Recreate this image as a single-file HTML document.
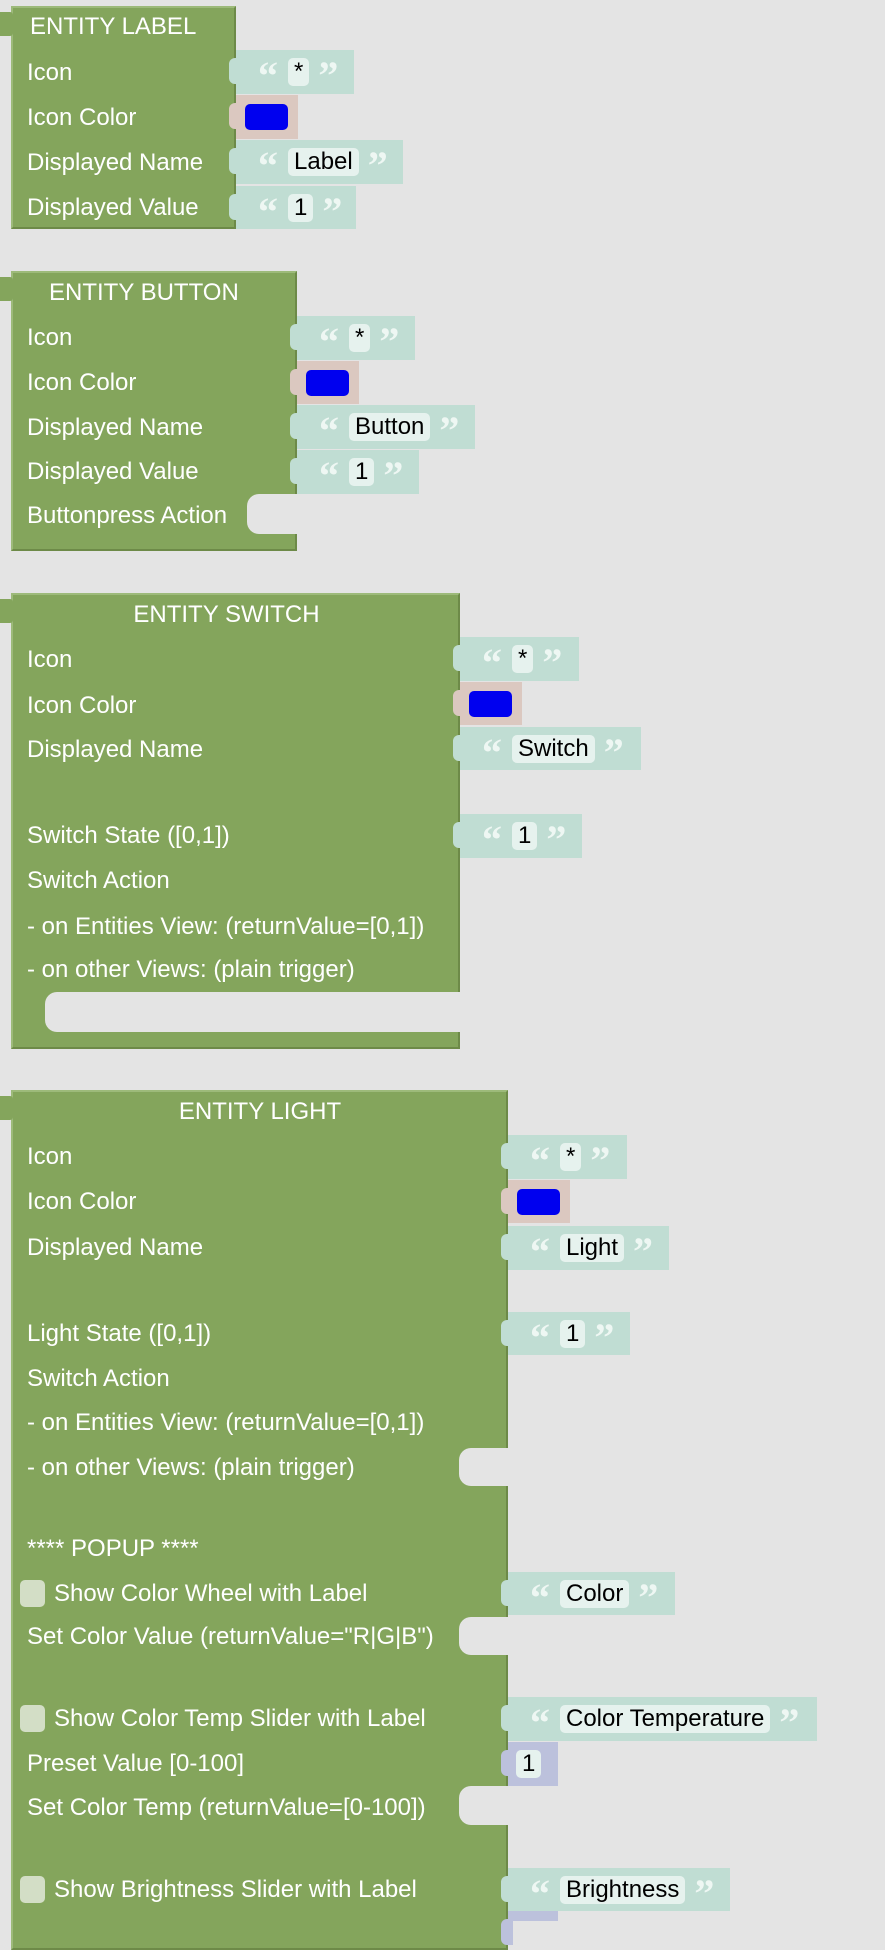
<!DOCTYPE html>
<html><head><style>
*{margin:0;padding:0;box-sizing:border-box}
body{width:885px;height:1915px;background:#e4e4e4;position:relative;overflow:hidden;font-family:"Liberation Sans",sans-serif;font-size:24px}
.b{position:absolute;background:#84a55c;border-top:2px solid #9dba7a;border-left:2px solid #9dba7a;border-bottom:2px solid #6d8a48;border-right:2px solid #6d8a48}
.t{position:absolute;color:#fff;line-height:26px;white-space:nowrap}
.v{position:absolute;background:#c0ddd3;display:flex;align-items:center;padding-left:22px;white-space:nowrap}
.v:before{content:"";position:absolute;left:-7px;top:8px;width:12px;height:26px;background:inherit;border-radius:6px 0 0 6px}
.q{color:#eef7f3;font-family:"Liberation Serif",serif;font-weight:bold;font-size:40px;line-height:24px;height:24px;overflow:visible;margin-top:8px}
.f{background:#e6f2ee;border-radius:5px;padding:0 6px;margin:0 9px 0 10px;color:#000;line-height:28px;height:28px}
.c{position:absolute;background:#dbc8c0}
.c:before{content:"";position:absolute;left:-7px;top:8px;width:12px;height:26px;background:inherit;border-radius:6px 0 0 6px}
.c i{position:absolute;left:9px;top:9px;width:43px;height:26px;background:#0000ef;border-radius:5px}
.n{position:absolute;background:#e4e4e4;border-radius:12px 0 0 12px}
.cb{position:absolute;width:25px;height:27px;background:#d3dec6;border-radius:5px}
.tab{position:absolute;left:0;width:13px;height:24px;background:#84a55c;border-radius:0 3px 3px 0}
</style></head><body>

<!-- LABEL -->
<div class="b" style="left:11px;top:6px;width:225px;height:223px"></div>
<div class="tab" style="top:12px"></div>
<div class="t" style="left:30px;top:14px">ENTITY LABEL</div>
<div class="t" style="left:27px;top:60px">Icon</div>
<div class="t" style="left:27px;top:105px">Icon Color</div>
<div class="t" style="left:27px;top:150px">Displayed Name</div>
<div class="t" style="left:27px;top:195px">Displayed Value</div>
<div class="v" style="left:236px;top:50px;width:118px;height:44px"><span class="q">“</span><span class="f">*</span><span class="q">”</span></div>
<div class="c" style="left:236px;top:95px;width:62px;height:44px"><i></i></div>
<div class="v" style="left:236px;top:140px;width:167px;height:44px"><span class="q">“</span><span class="f">Label</span><span class="q">”</span></div>
<div class="v" style="left:236px;top:186px;width:120px;height:43px"><span class="q">“</span><span class="f">1</span><span class="q">”</span></div>

<!-- BUTTON -->
<div class="b" style="left:11px;top:271px;width:286px;height:280px"></div>
<div class="tab" style="top:277px"></div>
<div class="t" style="left:49px;top:280px">ENTITY BUTTON</div>
<div class="t" style="left:27px;top:325px">Icon</div>
<div class="t" style="left:27px;top:370px">Icon Color</div>
<div class="t" style="left:27px;top:415px">Displayed Name</div>
<div class="t" style="left:27px;top:459px">Displayed Value</div>
<div class="t" style="left:27px;top:503px">Buttonpress Action</div>
<div class="n" style="left:247px;top:494px;width:52px;height:40px"></div>
<div class="v" style="left:297px;top:316px;width:118px;height:44px"><span class="q">“</span><span class="f">*</span><span class="q">”</span></div>
<div class="c" style="left:297px;top:361px;width:62px;height:43px"><i></i></div>
<div class="v" style="left:297px;top:405px;width:178px;height:44px"><span class="q">“</span><span class="f">Button</span><span class="q">”</span></div>
<div class="v" style="left:297px;top:450px;width:122px;height:44px"><span class="q">“</span><span class="f">1</span><span class="q">”</span></div>

<!-- SWITCH -->
<div class="b" style="left:11px;top:593px;width:449px;height:456px"></div>
<div class="tab" style="top:599px"></div>
<div class="n" style="left:45px;top:992px;width:415px;height:40px;border-radius:12px 0 0 12px"></div>
<div class="t" style="left:0;width:453px;text-align:center;top:602px">ENTITY SWITCH</div>
<div class="t" style="left:27px;top:647px">Icon</div>
<div class="t" style="left:27px;top:693px">Icon Color</div>
<div class="t" style="left:27px;top:737px">Displayed Name</div>
<div class="t" style="left:27px;top:823px">Switch State ([0,1])</div>
<div class="t" style="left:27px;top:868px">Switch Action</div>
<div class="t" style="left:27px;top:914px">- on Entities View: (returnValue=[0,1])</div>
<div class="t" style="left:27px;top:957px">- on other Views: (plain trigger)</div>
<div class="v" style="left:460px;top:637px;width:119px;height:44px"><span class="q">“</span><span class="f">*</span><span class="q">”</span></div>
<div class="c" style="left:460px;top:682px;width:62px;height:43px"><i></i></div>
<div class="v" style="left:460px;top:727px;width:181px;height:43px"><span class="q">“</span><span class="f">Switch</span><span class="q">”</span></div>
<div class="v" style="left:460px;top:814px;width:122px;height:44px"><span class="q">“</span><span class="f">1</span><span class="q">”</span></div>

<!-- LIGHT -->
<div class="b" style="left:11px;top:1090px;width:497px;height:860px"></div>
<div class="tab" style="top:1096px"></div>
<div class="n" style="left:459px;top:1448px;width:51px;height:38px"></div>
<div class="n" style="left:459px;top:1617px;width:51px;height:38px"></div>
<div class="n" style="left:459px;top:1786px;width:51px;height:39px"></div>
<div class="t" style="left:0;width:520px;text-align:center;top:1099px">ENTITY LIGHT</div>
<div class="t" style="left:27px;top:1144px">Icon</div>
<div class="t" style="left:27px;top:1189px">Icon Color</div>
<div class="t" style="left:27px;top:1235px">Displayed Name</div>
<div class="t" style="left:27px;top:1321px">Light State ([0,1])</div>
<div class="t" style="left:27px;top:1366px">Switch Action</div>
<div class="t" style="left:27px;top:1410px">- on Entities View: (returnValue=[0,1])</div>
<div class="t" style="left:27px;top:1455px">- on other Views: (plain trigger)</div>
<div class="t" style="left:27px;top:1536px">**** POPUP ****</div>
<div class="cb" style="left:20px;top:1580px"></div>
<div class="t" style="left:54px;top:1581px">Show Color Wheel with Label</div>
<div class="t" style="left:27px;top:1624px">Set Color Value (returnValue="R|G|B")</div>
<div class="cb" style="left:20px;top:1705px"></div>
<div class="t" style="left:54px;top:1706px">Show Color Temp Slider with Label</div>
<div class="t" style="left:27px;top:1751px">Preset Value [0-100]</div>
<div class="t" style="left:27px;top:1795px">Set Color Temp (returnValue=[0-100])</div>
<div class="cb" style="left:20px;top:1876px"></div>
<div class="t" style="left:54px;top:1877px">Show Brightness Slider with Label</div>
<div class="v" style="left:508px;top:1135px;width:119px;height:44px"><span class="q">“</span><span class="f">*</span><span class="q">”</span></div>
<div class="c" style="left:508px;top:1180px;width:62px;height:43px"><i></i></div>
<div class="v" style="left:508px;top:1226px;width:161px;height:44px"><span class="q">“</span><span class="f">Light</span><span class="q">”</span></div>
<div class="v" style="left:508px;top:1312px;width:122px;height:43px"><span class="q">“</span><span class="f">1</span><span class="q">”</span></div>
<div class="v" style="left:508px;top:1572px;width:167px;height:43px"><span class="q">“</span><span class="f">Color</span><span class="q">”</span></div>
<div class="v" style="left:508px;top:1697px;width:309px;height:44px"><span class="q">“</span><span class="f">Color Temperature</span><span class="q">”</span></div>
<div class="v" style="left:508px;top:1742px;width:50px;height:44px;background:#bcc1dc;padding-left:8px"><span class="f" style="margin:0">1</span></div>
<div class="v" style="left:508px;top:1868px;width:222px;height:43px"><span class="q">“</span><span class="f">Brightness</span><span class="q">”</span></div>
<div class="c" style="left:508px;top:1911px;width:50px;height:10px;background:#bcc1dc"></div>
</body></html>
